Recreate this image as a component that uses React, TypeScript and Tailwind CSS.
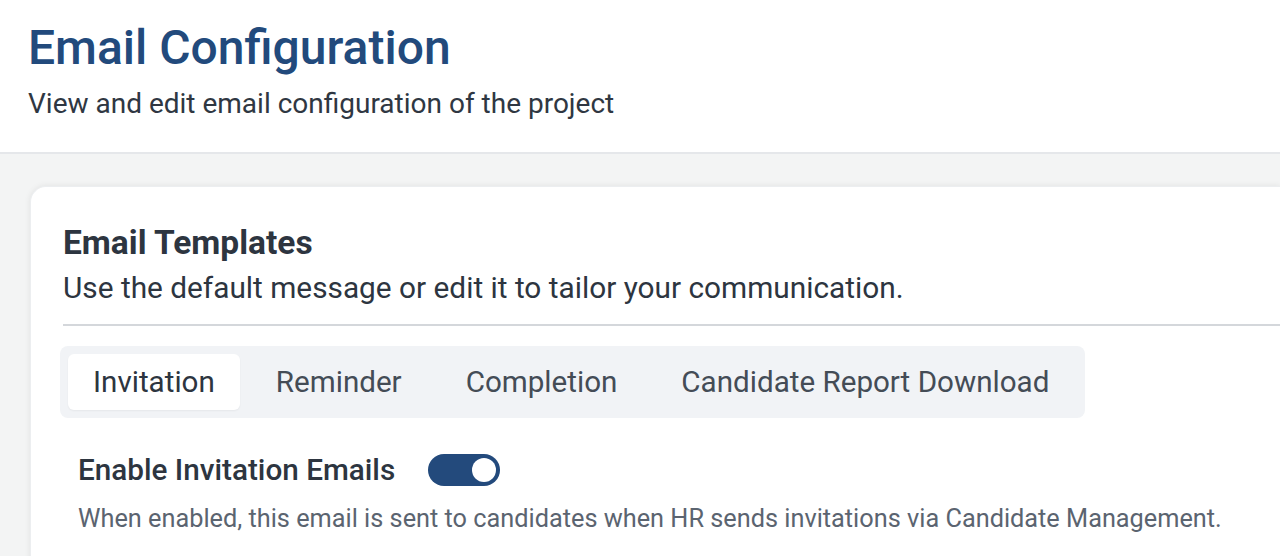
export default function App() {
  const tabs = ['Invitation', 'Reminder', 'Completion', 'Candidate Report Download']
  return (
    <div className="w-[1280px] h-[556px] overflow-hidden bg-[#f3f4f4] font-['Roboto',sans-serif]">
      <header className="bg-white border-b-2 border-[#e5e7ea] h-[154px] pl-7 pt-[18px]">
        <h1 className="text-[48px] leading-[60px] font-medium text-[#224a7c]">Email Configuration</h1>
        <p className="mt-[9px] text-[28px] leading-[34px] text-[#2f3742]">
          View and edit email configuration of the project
        </p>
      </header>
      <div className="pl-[30px] pt-[32px]">
        <section className="bg-white rounded-l-2xl shadow-[0_0_6px_rgba(0,0,0,0.08)] border border-[#eceef0] border-r-0 pl-8 pt-[36px] h-[400px]">
          <h2 className="text-[33.5px] leading-[40px] font-bold text-[#2d3540]">Email Templates</h2>
          <p className="mt-[6px] text-[29.8px] leading-[38px] text-[#2d3540]">
            Use the default message or edit it to tailor your communication.
          </p>
          <div className="mt-[17px] border-t-2 border-[#d4d7db]" />
          <div className="mt-[20px] -ml-[3px] inline-flex items-center gap-2 bg-[#f1f3f6] rounded-lg p-2">
            {tabs.map((t, i) => (
              <button
                key={t}
                className={
                  i === 0
                    ? 'h-[56px] px-[25px] rounded-md bg-white text-[29.6px] text-[#2d3540] shadow-[0_1px_2px_rgba(0,0,0,0.05)]'
                    : 'h-[56px] px-[28px] text-[29.6px] text-[#444c56]'
                }
              >
                {t}
              </button>
            ))}
          </div>
          <div className="mt-[34px] pl-[15px]">
            <div className="flex items-center gap-[33px]">
              <span className="text-[29.7px] leading-[36px] font-medium text-[#2d3540]">
                Enable Invitation Emails
              </span>
              <span className="relative w-[72px] h-[32px] rounded-full bg-[#234a7c]">
                <span className="absolute right-[4px] top-[4px] w-[24px] h-[24px] rounded-full bg-white" />
              </span>
            </div>
            <p className="mt-[15px] text-[25.3px] leading-[32px] text-[#5b6470]">
              When enabled, this email is sent to candidates when HR sends invitations via Candidate Management.
            </p>
          </div>
        </section>
      </div>
    </div>
  )
}
